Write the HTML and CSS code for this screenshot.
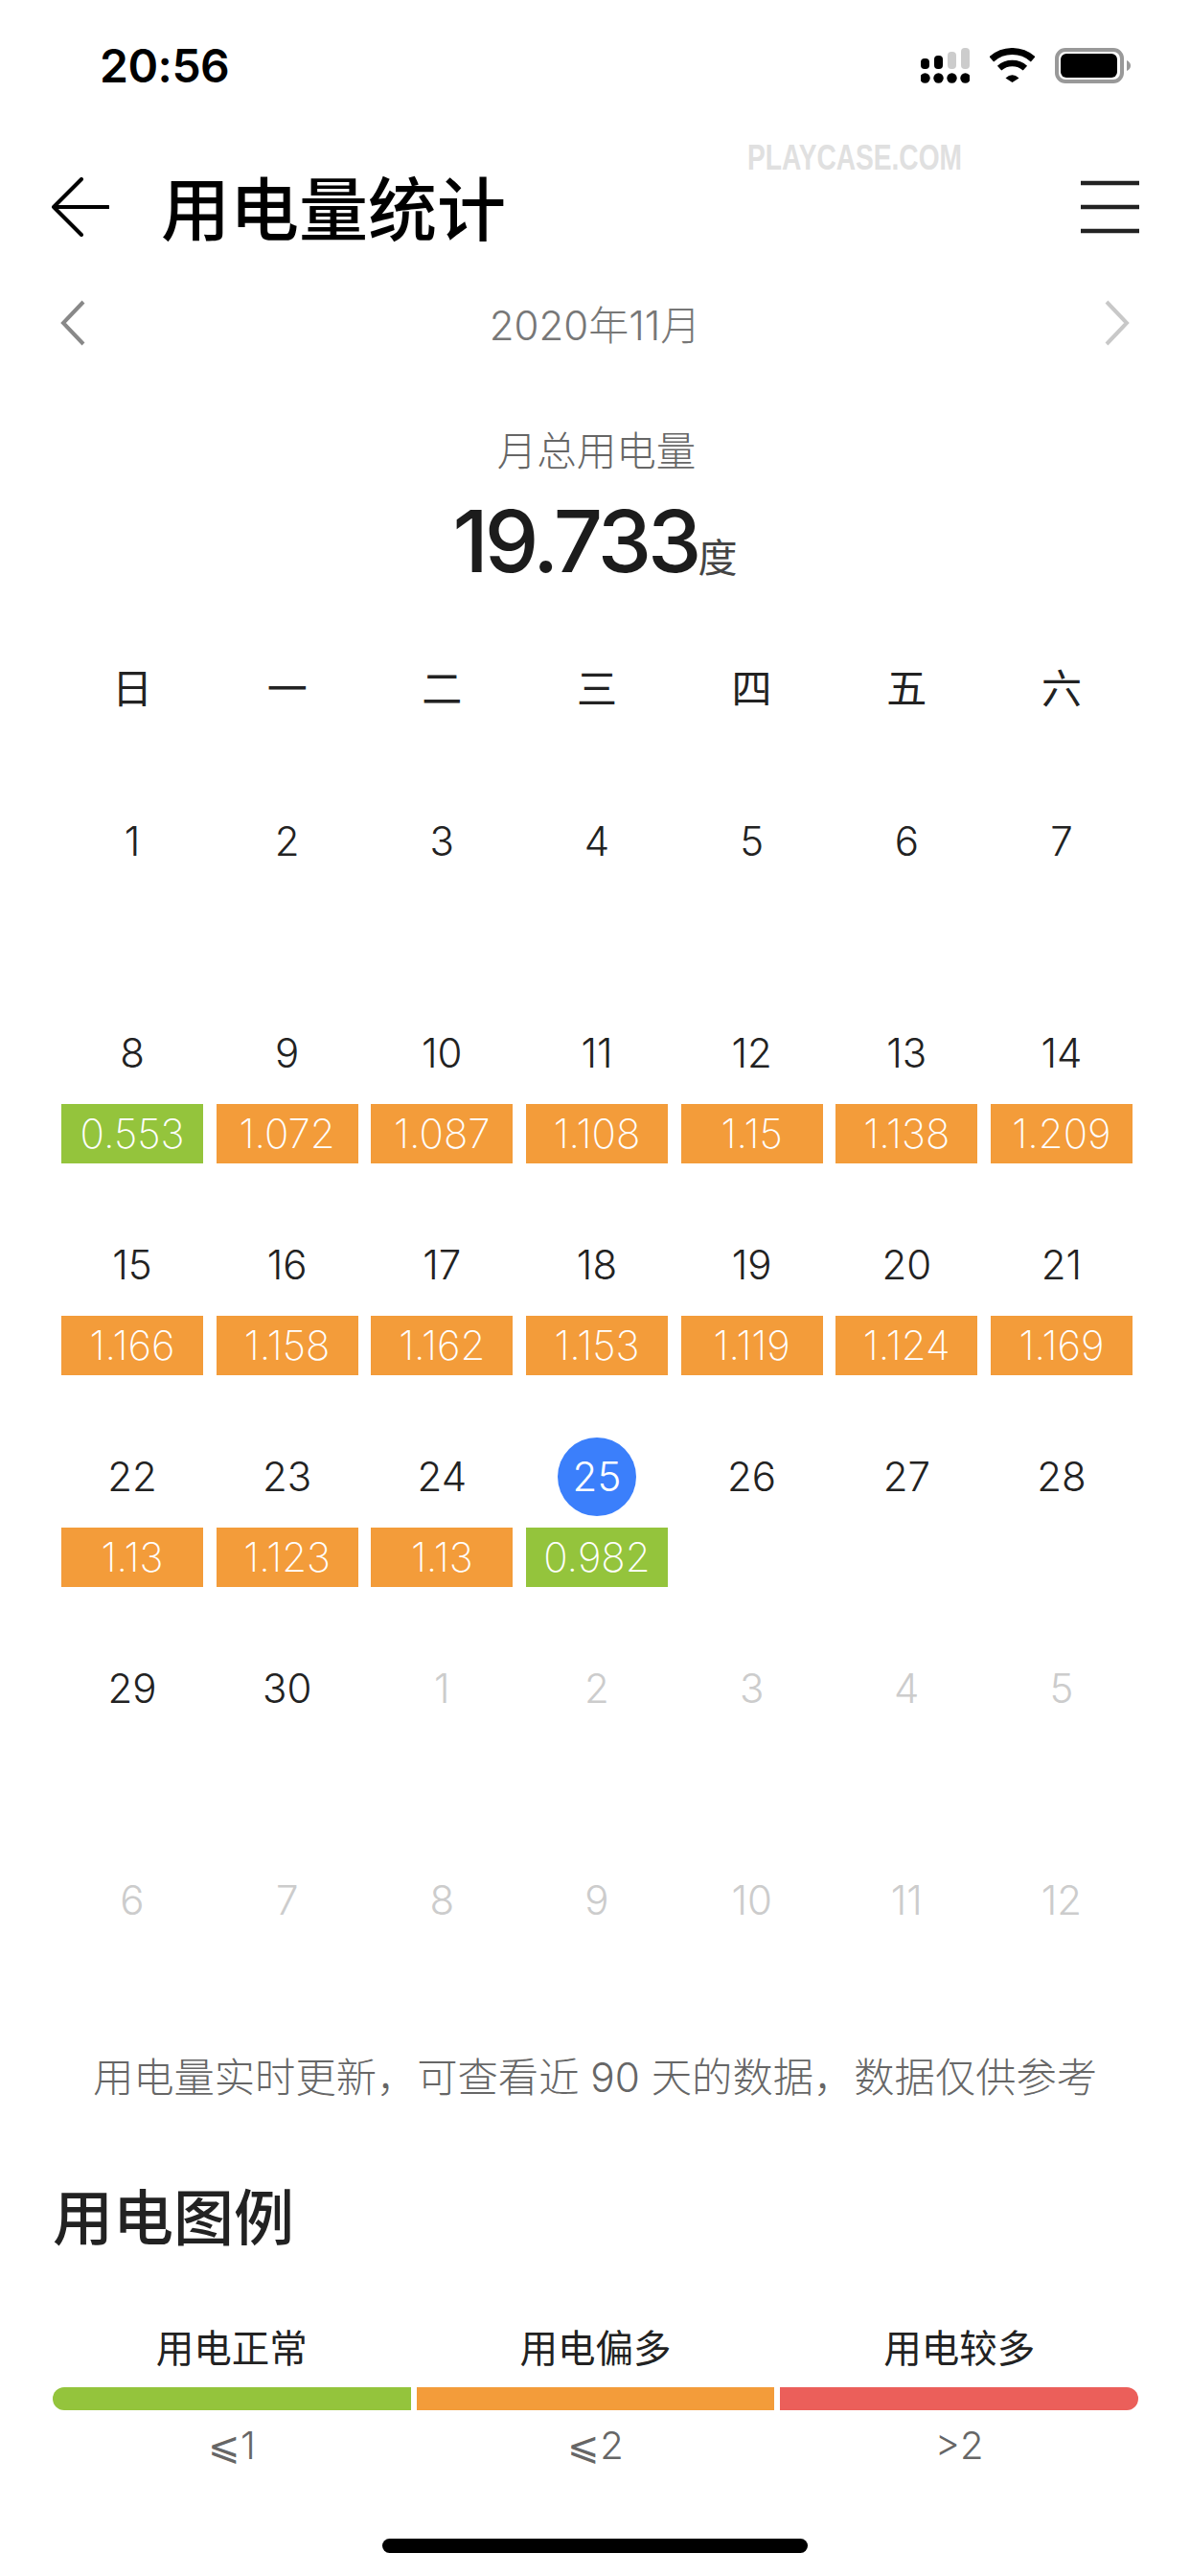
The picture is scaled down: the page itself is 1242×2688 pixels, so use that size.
FILE: index.html
```html
<!DOCTYPE html>
<html lang="zh-CN">
<head>
  <meta charset="UTF-8" />
  <meta name="viewport" content="width=device-width, initial-scale=1.0"/>
  <title>用电量统计</title>
  <link rel="stylesheet" href="styles.css">
</head>
<body>

  <div class="status-bar">
    <span class="time">20:56</span>
    <div class="status-icons">
      <svg width="51" height="37" viewBox="0 0 51 37">
        <rect x="0" y="11" width="9" height="11" rx="4" fill="#000"/>
        <rect x="14" y="8" width="9" height="14" rx="4" fill="#000"/>
        <rect x="28" y="4" width="9" height="18" rx="4" fill="#ccc"/>
        <rect x="42" y="0" width="9" height="22" rx="4" fill="#ccc"/>
        <circle cx="4.5" cy="31.5" r="5.2" fill="#000"/>
        <circle cx="18.5" cy="31.5" r="5.2" fill="#000"/>
        <circle cx="32.5" cy="31.5" r="5.2" fill="#000"/>
        <circle cx="46.5" cy="31.5" r="5.2" fill="#000"/>
      </svg>
      <svg width="47" height="37" viewBox="0 0 47 37">
        <path d="M1.8 11.8A32.5 32.5 0 0 1 45.2 11.8" fill="none" stroke="#000" stroke-width="7"/>
        <path d="M10.1 21.1A20 20 0 0 1 36.9 21.1" fill="none" stroke="#000" stroke-width="6.5"/>
        <path d="M23.5 36L16.5 31.5Q23.5 25 30.5 31.5Z" fill="#000"/>
      </svg>
      <svg width="79" height="37" viewBox="0 0 79 37">
        <rect x="2" y="2" width="68" height="33" rx="9" fill="none" stroke="#999" stroke-width="4"/>
        <rect x="6" y="6" width="59" height="25" rx="6" fill="#000"/>
        <path d="M75 13Q79 15 79 18.500Q79 22 75 24Z" fill="#999"/>
      </svg>
    </div>
  </div>

  <div class="watermark">PLAYCASE.COM</div>

  <div class="nav">
    <svg class="back" width="60" height="62" viewBox="0 0 60 62">
      <path d="M31 2L2 31L31 60M2 31H59" fill="none" stroke="#000" stroke-width="4" stroke-linecap="round" stroke-linejoin="round"/>
    </svg>
    <h1>用电量统计</h1>
    <svg class="menu" width="61" height="56" viewBox="0 0 61 56">
      <path d="M0 3H61M0 28H61M0 53H61" fill="none" stroke="#222" stroke-width="4.500"/>
    </svg>
  </div>

  <div class="month-row">
    <svg width="26" height="48" viewBox="0 0 26 48">
      <path d="M24 2L3 24L24 46" fill="none" stroke="#888" stroke-width="4"/>
    </svg>
    <span class="month">2020年11月</span>
    <svg width="26" height="48" viewBox="0 0 26 48">
      <path d="M2 2L23 24L2 46" fill="none" stroke="#c8c8c8" stroke-width="4"/>
    </svg>
  </div>

  <div class="total">
    <div class="total-label">月总用电量</div>
    <div class="total-value"><span class="digits">19.733</span><small>度</small></div>
  </div>

  <div class="weekdays">
    <span>日</span><span>一</span><span>二</span><span>三</span><span>四</span><span>五</span><span>六</span>
  </div>

  <div class="calendar">
    <div class="day"><span class="num">1</span></div>
    <div class="day"><span class="num">2</span></div>
    <div class="day"><span class="num">3</span></div>
    <div class="day"><span class="num">4</span></div>
    <div class="day"><span class="num">5</span></div>
    <div class="day"><span class="num">6</span></div>
    <div class="day"><span class="num">7</span></div>

    <div class="day"><span class="num">8</span><span class="use green">0.553</span></div>
    <div class="day"><span class="num">9</span><span class="use orange">1.072</span></div>
    <div class="day"><span class="num">10</span><span class="use orange">1.087</span></div>
    <div class="day"><span class="num">11</span><span class="use orange">1.108</span></div>
    <div class="day"><span class="num">12</span><span class="use orange">1.15</span></div>
    <div class="day"><span class="num">13</span><span class="use orange">1.138</span></div>
    <div class="day"><span class="num">14</span><span class="use orange">1.209</span></div>

    <div class="day"><span class="num">15</span><span class="use orange">1.166</span></div>
    <div class="day"><span class="num">16</span><span class="use orange">1.158</span></div>
    <div class="day"><span class="num">17</span><span class="use orange">1.162</span></div>
    <div class="day"><span class="num">18</span><span class="use orange">1.153</span></div>
    <div class="day"><span class="num">19</span><span class="use orange">1.119</span></div>
    <div class="day"><span class="num">20</span><span class="use orange">1.124</span></div>
    <div class="day"><span class="num">21</span><span class="use orange">1.169</span></div>

    <div class="day"><span class="num">22</span><span class="use orange">1.13</span></div>
    <div class="day"><span class="num">23</span><span class="use orange">1.123</span></div>
    <div class="day"><span class="num">24</span><span class="use orange">1.13</span></div>
    <div class="day"><span class="num today">25</span><span class="use green">0.982</span></div>
    <div class="day"><span class="num">26</span></div>
    <div class="day"><span class="num">27</span></div>
    <div class="day"><span class="num">28</span></div>

    <div class="day"><span class="num">29</span></div>
    <div class="day"><span class="num">30</span></div>
    <div class="day off"><span class="num">1</span></div>
    <div class="day off"><span class="num">2</span></div>
    <div class="day off"><span class="num">3</span></div>
    <div class="day off"><span class="num">4</span></div>
    <div class="day off"><span class="num">5</span></div>

    <div class="day off"><span class="num">6</span></div>
    <div class="day off"><span class="num">7</span></div>
    <div class="day off"><span class="num">8</span></div>
    <div class="day off"><span class="num">9</span></div>
    <div class="day off"><span class="num">10</span></div>
    <div class="day off"><span class="num">11</span></div>
    <div class="day off"><span class="num">12</span></div>
  </div>

  <p class="note">用电量实时更新，可查看近 90 天的数据，数据仅供参考</p>

  <h2>用电图例</h2>

  <div class="legend">
    <span class="legend-label">用电正常</span>
    <span class="legend-label">用电偏多</span>
    <span class="legend-label">用电较多</span>
    <span class="bar green first"></span>
    <span class="bar orange"></span>
    <span class="bar red last"></span>
    <span class="legend-value">⩽1</span>
    <span class="legend-value">⩽2</span>
    <span class="legend-value">&gt;2</span>
  </div>

  <div class="home-bar"></div>

</body>
</html>
```

FILE: styles.css
```css
body {
  font-family: Inter, "Noto Sans CJK SC", sans-serif;
  background-color: #fff;
  color: #222;
  margin: 0;
  width: 1242px;
  height: 2688px;
  overflow: hidden;
  position: relative;
}

.status-bar {
  height: 136px;
  display: flex;
  align-items: center;
  justify-content: space-between;
  padding: 0 62px 0 104px;
}

.time {
  font-size: 48px;
  font-weight: 600;
  letter-spacing: -0.5px;
  color: #000;
}

.status-icons {
  display: flex;
  align-items: center;
  gap: 21px;
}

/* watermark is squeezed, no narrow bold font here */
.watermark {
  position: absolute;
  top: 146px;
  left: 780px;
  font-family: "Liberation Sans", sans-serif;
  font-size: 37px;
  line-height: 38px;
  font-weight: 700;
  color: #e0e0e0;
  white-space: nowrap;
  transform: scaleX(0.76);
  transform-origin: left center;
}

.nav {
  height: 160px;
  display: flex;
  align-items: center;
  padding: 0 53px 0 54px;
}

.nav h1 {
  flex: 1;
  margin: 0 0 6px 54px;
  font-size: 72px;
  font-weight: 500;
  color: #000;
}

.month-row {
  height: 82px;
  display: flex;
  align-items: center;
  justify-content: space-between;
  padding: 0 63px;
}

.month {
  font-size: 42px;
  font-weight: 300;
  color: #777;
  margin-bottom: 2px;
}

.total {
  margin-top: 63px;
  text-align: center;
}

.total-label {
  height: 60px;
  line-height: 60px;
  padding-left: 3px;
  font-size: 41.500px;
  font-weight: 300;
  color: #666;
}

.total-value {
  margin-top: 14px;
  height: 100px;
  line-height: 100px;
  font-size: 90px;
  font-weight: 500;
  color: #1c1c1c;
}

.digits {
  letter-spacing: -4px;
}

.total-value small {
  font-size: 41px;
  font-weight: 400;
  color: #444;
}

.weekdays,
.calendar {
  display: grid;
  grid-template-columns: repeat(7, 148px);
  column-gap: 13.67px;
  padding: 0 60px 0 64px;
}

.weekdays {
  margin-top: 64px;
  height: 80px;
  line-height: 80px;
  text-align: center;
  font-size: 42px;
  font-weight: 400;
}

.calendar {
  margin-top: 78px;
  row-gap: 65px;
}

.day {
  height: 156px;
  display: flex;
  flex-direction: column;
  align-items: center;
  font-size: 42px;
  font-weight: 300;
}

.num {
  width: 82px;
  height: 82px;
  line-height: 82px;
  text-align: center;
  border-radius: 50%;
}

.today {
  background-color: #3b7ffb;
  color: #fff;
}

.off {
  color: #ccc;
}

.use {
  width: 100%;
  height: 62px;
  line-height: 62px;
  margin-top: 12px;
  text-align: center;
  color: #fff;
  font-size: 42px;
  font-weight: 250;
}

.green { background-color: #94c43c; }
.orange { background-color: #f39c3a; }
.red { background-color: #eb5f5a; }

.note {
  margin: 40px 0 0;
  height: 60px;
  line-height: 60px;
  text-align: center;
  font-size: 42.300px;
  font-weight: 300;
  color: #666;
  white-space: nowrap;
}

h2 {
  margin: 76px 0 0 55px;
  height: 80px;
  line-height: 80px;
  font-size: 63px;
  font-weight: 500;
  color: #222;
}

.legend {
  margin: 72px 54px 0 55px;
  display: grid;
  grid-template-columns: repeat(3, 1fr);
  column-gap: 6px;
  text-align: center;
}

.legend-label {
  height: 50px;
  line-height: 50px;
  font-size: 39.500px;
  font-weight: 400;
  margin-bottom: 15px;
}

.bar {
  height: 24px;
}

.bar.first { border-radius: 12px 0 0 12px; }
.bar.last { border-radius: 0 12px 12px 0; }

.legend-value {
  height: 50px;
  line-height: 50px;
  margin-top: 12px;
  font-size: 40px;
  font-weight: 300;
  color: #666;
}

.home-bar {
  position: absolute;
  left: 399px;
  bottom: 24px;
  width: 444px;
  height: 15px;
  border-radius: 8px;
  background-color: #000;
}
```
